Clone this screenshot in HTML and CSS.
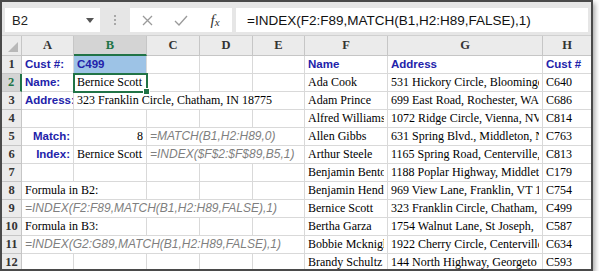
FILE: index.html
```html
<!DOCTYPE html>
<html lang="en">
<head>
    <meta charset="UTF-8">
    <title>INDEX MATCH</title>
    <link rel="stylesheet" href="styles.css">
</head>
<body>
    <div class="window">
        <div class="formula-bar">
            <div class="name-box">
                <span>B2</span>
                <svg width="8" height="5" viewBox="0 0 8 5"><path d="M0 0H8L4 5Z" fill="#555"/></svg>
            </div>
            <div class="grip"><i></i><i></i><i></i></div>
            <div class="fx-buttons">
                <span class="btn"><svg width="11" height="11" viewBox="0 0 11 11"><path d="M1 1L10 10M10 1L1 10" stroke="#9a9a9a" stroke-width="1.3" fill="none"/></svg></span>
                <span class="btn"><svg width="14" height="11" viewBox="0 0 14 11"><path d="M1 6L5 10L13 1" stroke="#9a9a9a" stroke-width="1.3" fill="none"/></svg></span>
                <span class="btn fx">f<small>x</small></span>
            </div>
            <div class="formula-input">=INDEX(F2:F89,MATCH(B1,H2:H89,FALSE),1)</div>
        </div>

        <div class="sheet">
            <!-- column headers -->
            <div class="ch corner"><svg width="10" height="10" viewBox="0 0 10 10"><path d="M10 0V10H0Z" fill="#b8b8b8"/></svg></div>
            <div class="ch">A</div>
            <div class="ch on">B</div>
            <div class="ch">C</div>
            <div class="ch">D</div>
            <div class="ch">E</div>
            <div class="ch">F</div>
            <div class="ch">G</div>
            <div class="ch">H</div>

            <!-- 1 -->
            <div class="rh">1</div>
            <div class="c lbl">Cust #:</div>
            <div class="c lbl input">C499</div>
            <div class="c"></div>
            <div class="c"></div>
            <div class="c"></div>
            <div class="c lbl">Name</div>
            <div class="c lbl">Address</div>
            <div class="c lbl">Cust #</div>

            <!-- 2 -->
            <div class="rh on">2</div>
            <div class="c lbl">Name:</div>
            <div class="c sel">Bernice Scott</div>
            <div class="c"></div>
            <div class="c"></div>
            <div class="c"></div>
            <div class="c">Ada Cook</div>
            <div class="c"><span class="clip">531 Hickory Circle, Bloomingd</span></div>
            <div class="c">C640</div>

            <!-- 3 -->
            <div class="rh">3</div>
            <div class="c lbl">Address:</div>
            <div class="c span-4">323 Franklin Circle, Chatham, IN 18775</div>
            <div class="c">Adam Prince</div>
            <div class="c"><span class="clip">699 East Road, Rochester, WA</span></div>
            <div class="c">C686</div>

            <!-- 4 -->
            <div class="rh">4</div>
            <div class="c"></div>
            <div class="c"></div>
            <div class="c"></div>
            <div class="c"></div>
            <div class="c"></div>
            <div class="c"><span class="clip">Alfred Williams</span></div>
            <div class="c"><span class="clip">1072 Ridge Circle, Vienna, NV</span></div>
            <div class="c">C814</div>

            <!-- 5 -->
            <div class="rh">5</div>
            <div class="c lbl right">Match:</div>
            <div class="c right">8</div>
            <div class="c fml span-3">=MATCH(B1,H2:H89,0)</div>
            <div class="c">Allen Gibbs</div>
            <div class="c"><span class="clip">631 Spring Blvd., Middleton, N</span></div>
            <div class="c">C763</div>

            <!-- 6 -->
            <div class="rh">6</div>
            <div class="c lbl right">Index:</div>
            <div class="c">Bernice Scott</div>
            <div class="c fml span-3">=INDEX($F$2:$F$89,B5,1)</div>
            <div class="c">Arthur Steele</div>
            <div class="c"><span class="clip">1165 Spring Road, Centerville,</span></div>
            <div class="c">C813</div>

            <!-- 7 -->
            <div class="rh">7</div>
            <div class="c"></div>
            <div class="c"></div>
            <div class="c"></div>
            <div class="c"></div>
            <div class="c"></div>
            <div class="c"><span class="clip">Benjamin Benton</span></div>
            <div class="c"><span class="clip">1188 Poplar Highway, Middlet</span></div>
            <div class="c">C179</div>

            <!-- 8 -->
            <div class="rh">8</div>
            <div class="c span-2">Formula in B2:</div>
            <div class="c"></div>
            <div class="c"></div>
            <div class="c"></div>
            <div class="c"><span class="clip">Benjamin Hende</span></div>
            <div class="c"><span class="clip">969 View Lane, Franklin, VT 14</span></div>
            <div class="c">C754</div>

            <!-- 9 -->
            <div class="rh">9</div>
            <div class="c fml span-5">=INDEX(F2:F89,MATCH(B1,H2:H89,FALSE),1)</div>
            <div class="c">Bernice Scott</div>
            <div class="c"><span class="clip">323 Franklin Circle, Chatham, I</span></div>
            <div class="c">C499</div>

            <!-- 10 -->
            <div class="rh">10</div>
            <div class="c span-2">Formula in B3:</div>
            <div class="c"></div>
            <div class="c"></div>
            <div class="c"></div>
            <div class="c">Bertha Garza</div>
            <div class="c"><span class="clip">1754 Walnut Lane, St Joseph,</span></div>
            <div class="c">C587</div>

            <!-- 11 -->
            <div class="rh">11</div>
            <div class="c fml span-5">=INDEX(G2:G89,MATCH(B1,H2:H89,FALSE),1)</div>
            <div class="c"><span class="clip">Bobbie Mcknigh</span></div>
            <div class="c"><span class="clip">1922 Cherry Circle, Centerville,</span></div>
            <div class="c">C634</div>

            <!-- 12 -->
            <div class="rh">12</div>
            <div class="c"></div>
            <div class="c"></div>
            <div class="c"></div>
            <div class="c"></div>
            <div class="c"></div>
            <div class="c">Brandy Schultz</div>
            <div class="c"><span class="clip">144 North Highway, Georgeto</span></div>
            <div class="c">C593</div>
        </div>
    </div>
</body>
</html>
```

FILE: styles.css
```css
body {
    margin: 0;
    background-color: #fff;
}
.window {
    width: 593px;
    height: 271px;
    box-sizing: border-box;
    border: 2px solid #4a4a4a;
    box-shadow: 2px 3px 5px rgba(0, 0, 0, 0.35);
    overflow: hidden;
    background-color: #fff;
}

/* formula bar */
.formula-bar {
    height: 34px;
    box-sizing: border-box;
    display: flex;
    align-items: flex-start;
    padding: 6px 0 0 3px;
    background-color: #e6e6e6;
    border-bottom: 1px solid #d0d0d0;
}
.name-box {
    width: 95px;
    height: 24px;
    box-sizing: border-box;
    display: flex;
    align-items: center;
    justify-content: space-between;
    padding: 0 6px 0 7px;
    background-color: #fff;
    font: 13px "Liberation Sans", sans-serif;
    color: #222;
}
.grip {
    width: 30px;
    height: 24px;
    box-sizing: border-box;
    display: flex;
    flex-direction: column;
    align-items: center;
    gap: 2px;
    padding-top: 7px;
}
.grip i {
    width: 2px;
    height: 2px;
    background-color: #a8a8a8;
}
.fx-buttons {
    width: 102px;
    height: 24px;
    display: flex;
    background-color: #fff;
}
.btn {
    width: 34px;
    display: flex;
    align-items: center;
    justify-content: center;
}
.fx {
    font: italic 15px "Liberation Serif", serif;
    color: #333;
}
.fx small {
    font-size: 11px;
    margin-top: 4px;
}
.formula-input {
    flex: 1;
    height: 24px;
    margin: 0 3px 0 4px;
    padding-left: 11px;
    display: flex;
    align-items: center;
    background-color: #fff;
    font: 13.5px "Liberation Sans", sans-serif;
    color: #111;
}

/* grid */
.sheet {
    display: grid;
    grid-template-columns: 20px 52px 73px 53px 53px 52px 83px 155px 49px;
    grid-template-rows: 20px;
    grid-auto-rows: 18px;
}
.ch, .rh {
    box-sizing: border-box;
    display: flex;
    align-items: center;
    justify-content: center;
    background-color: #ebebeb;
    border-right: 1px solid #c6c6c6;
    border-bottom: 1px solid #c6c6c6;
    font: bold 12.5px "Liberation Serif", serif;
    color: #333;
}
.ch.on {
    background-color: #d4d4d4;
    border-bottom: 2px solid #217346;
    color: #217346;
}
.rh.on {
    background-color: #d4d4d4;
    border-right: 2px solid #217346;
    color: #217346;
}
.corner {
    align-items: flex-end;
    justify-content: flex-end;
    padding: 0 3px 3px 0;
}
.c {
    box-sizing: border-box;
    display: flex;
    align-items: flex-end;
    padding: 0 3px 2px;
    border-right: 1px solid #d9d9d9;
    border-bottom: 1px solid #d9d9d9;
    overflow: hidden;
    white-space: nowrap;
    font: 12px/14px "Liberation Serif", serif;
    color: #000;
}
.clip {
    overflow: hidden;
    min-width: 0;
}
.lbl {
    font: bold 11.5px/14px "Liberation Sans", sans-serif;
    color: #2222aa;
}
.fml {
    font: italic 12px/14px "Liberation Sans", sans-serif;
    color: #7f7f7f;
}
.right {
    justify-content: flex-end;
}
.input {
    background-color: #9dc3e6;
}
.sel {
    position: relative;
    overflow: visible;
    outline: 2px solid #217346;
    outline-offset: -1px;
    z-index: 1;
}
.sel::after {
    content: "";
    position: absolute;
    right: -4px;
    bottom: -4px;
    width: 5px;
    height: 5px;
    background-color: #217346;
    border: 1px solid #fff;
}
.span-2 { grid-column: span 2; }
.span-3 { grid-column: span 3; }
.span-4 { grid-column: span 4; }
.span-5 { grid-column: span 5; }
```
